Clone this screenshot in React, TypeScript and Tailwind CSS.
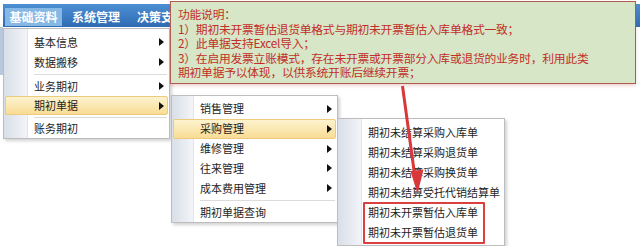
import React from "react";

const Arrow = () => (
  <svg width="5" height="8" viewBox="0 0 5 8" className="block">
    <polygon points="0,0 5,4 0,8" fill="#111" />
  </svg>
);

type Item = { label: string; sub?: boolean; hl?: boolean; h?: number } | "sep";

function Menu({
  items,
  gutter,
  className,
}: {
  items: Item[];
  gutter: number;
  className: string;
}) {
  return (
    <div
      className={
        "absolute bg-white border border-[#bdbdbd] shadow-[2px_2px_3px_rgba(0,0,0,0.18)] flex " +
        className
      }
    >
      <div
        className="shrink-0 bg-gradient-to-r from-[#d9dfe8] to-[#f2f4f8] border-r border-[#e2e4e8]"
        style={{ width: gutter }}
      />
      <div className="flex-1 flex flex-col pt-[3px]">
        {items.map((it, i) =>
          it === "sep" ? (
            <div key={i} className="h-[4px] flex items-center pl-[6px] pr-[2px]">
              <div className="h-px w-full bg-[#dcdcdc]" />
            </div>
          ) : (
            <div key={i} className="relative flex items-center" style={{ height: it.h ?? 20 }}>
              {it.hl && (
                <div
                  className="absolute top-0 bottom-0 right-[1px] bg-gradient-to-b from-[#fdf3cf] to-[#f9dc94] border border-[#eccb7c] rounded-[2px]"
                  style={{ left: -gutter + 1 }}
                />
              )}
              <span className="relative pl-[6px] text-[11px] text-[#1e1e1e] leading-none">
                {it.label}
              </span>
              {it.sub && (
                <span className="relative ml-auto mr-[5px]">
                  <Arrow />
                </span>
              )}
            </div>
          )
        )}
      </div>
    </div>
  );
}

export default function App() {
  return (
    <div className="relative w-[640px] h-[246px] overflow-hidden bg-white font-['Noto_Sans_CJK_SC','Liberation_Sans',sans-serif]">
      <div className="flex flex-col pt-[4px]">
        <div className="ml-[3px] h-[23px] bg-gradient-to-b from-[#4d8fd3] to-[#2f6bb3] flex items-center">
          <div className="ml-[2px] h-[18px] mt-[2px] w-[57px] bg-[#86b8e6] flex items-center justify-center text-white text-[12px] font-bold">
            基础资料
          </div>
          <div className="ml-[10px] text-white text-[12px] font-bold mt-[2px]">系统管理</div>
          <div className="ml-[17px] text-white text-[12px] font-bold mt-[2px]">决策支持</div>
        </div>
        <div className="w-[3px] h-[48px] bg-[#b9c9dd]" />
      </div>

      <Menu
        className="left-[3px] top-[28px] w-[167px] h-[111px]"
        gutter={24}
        items={[
          { label: "基本信息", sub: true },
          { label: "数据搬移", sub: true },
          "sep",
          { label: "业务期初", sub: true },
          { label: "期初单据", sub: true, hl: true, h: 19 },
          "sep",
          { label: "账务期初", h: 19 },
        ]}
      />

      <Menu
        className="left-[171px] top-[95px] w-[167px] h-[128px]"
        gutter={22}
        items={[
          { label: "销售管理", sub: true },
          { label: "采购管理", sub: true, hl: true },
          { label: "维修管理", sub: true },
          { label: "往来管理", sub: true },
          { label: "成本费用管理", sub: true },
          "sep",
          { label: "期初单据查询" },
        ]}
      />

      <Menu
        className="left-[337px] top-[118px] w-[168px] h-[128px]"
        gutter={24}
        items={[
          { label: "期初未结算采购入库单" },
          { label: "期初未结算采购退货单" },
          { label: "期初未结算采购换货单" },
          { label: "期初未结算受托代销结算单" },
          { label: "期初未开票暂估入库单" },
          { label: "期初未开票暂估退货单" },
        ]}
      />

      <div className="absolute left-[363px] top-[202px] w-[122px] h-[42px] border-2 border-[#d9403f] rounded-[1px]" />

      <div className="absolute left-[170px] top-[1px] w-[466px] h-[83px] bg-[#d6e6c6] border border-[#b25a50] shadow-[0_2px_3px_rgba(180,90,80,0.25)] pl-[7px] pt-[5px] text-[#c22e28] text-[11.8px] leading-[14.5px] tracking-[-0.25px]">
        <div>功能说明：</div>
        <div>1）期初未开票暂估退货单格式与期初未开票暂估入库单格式一致；</div>
        <div>2）此单据支持Excel导入；</div>
        <div>3）在启用发票立账模式，存在未开票或开票部分入库或退货的业务时，利用此类</div>
        <div>期初单据予以体现，以供系统开账后继续开票；</div>
      </div>

      <svg className="absolute left-0 top-0 pointer-events-none" width="640" height="246">
        <line x1="402.5" y1="86" x2="414.5" y2="174" stroke="#d8383a" strokeWidth="3" />
        <polygon points="417.5,194 410.5,171 423.5,169.5" fill="#d8383a" />
      </svg>
    </div>
  );
}
